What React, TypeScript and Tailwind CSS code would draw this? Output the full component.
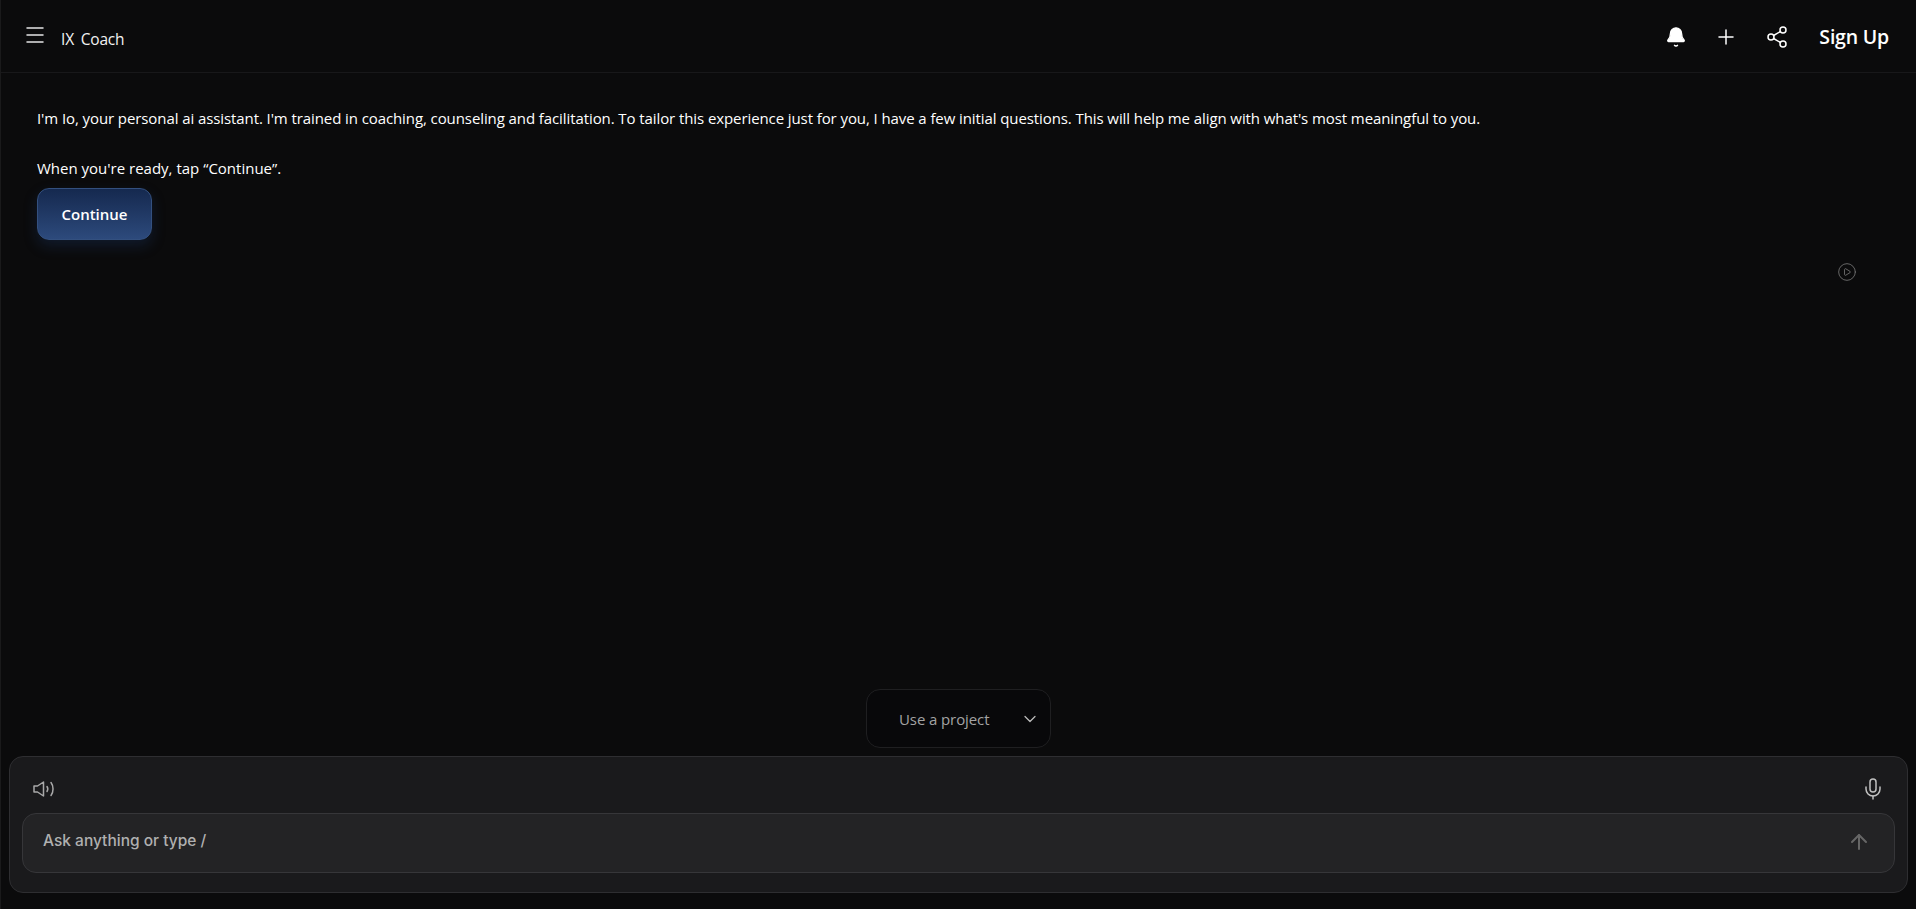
import { Menu, Bell, Plus, Share2, CirclePlay, ChevronDown, Mic, ArrowUp } from "lucide-react";

const body = { fontFamily: '"Open Sans", "Noto Sans", sans-serif' };

export default function App() {
  return (
    <div className="h-[909px] w-full flex flex-col bg-[#0b0b0c] text-white border-l border-[#1a1a1b] overflow-hidden" style={body}>
      <header className="h-[73px] shrink-0 flex items-center justify-between border-b border-[#18181a] pl-[22px] pr-[27px]">
        <div className="flex items-center gap-[14px]">
          <Menu size={24} strokeWidth={1.5} className="text-[#e5e5e5] -mt-[2px]" />
          <span className="text-[15.5px] text-[#f2f2f2] tracking-[-0.2px] [word-spacing:3px] mt-[7px]">IX Coach</span>
        </div>
        <div className="flex items-center">
          <Bell size={22} fill="white" strokeWidth={1.5} className="mr-[27px] mt-[1px]" />
          <Plus size={24} strokeWidth={1.5} className="mr-[27px] mt-[1px]" />
          <Share2 size={24} strokeWidth={1.5} className="mr-[30px] mt-[1px]" />
          <span className="text-[19.5px] font-semibold tracking-[-0.2px] mt-[1px]">Sign Up</span>
        </div>
      </header>
      <main className="flex-1 relative pl-[36px] pt-[33px]">
        <p className="text-[15px] leading-[25px] tracking-[-0.09px]">I'm Io, your personal ai assistant. I'm trained in coaching, counseling and facilitation. To tailor this experience just for you, I have a few initial questions. This will help me align with what's most meaningful to you.</p>
        <p className="text-[15px] leading-[25px] mt-[25px]">When you're ready, tap “Continue”.</p>
        <button className="mt-[7px] w-[115px] h-[52px] rounded-[12px] border border-[#33507f] bg-gradient-to-b from-[#15294f] to-[#2d4a7c] text-[15px] font-semibold shadow-[0_6px_14px_rgba(30,64,120,0.3)]">Continue</button>
        <div className="flex justify-end pr-[59px] mt-[22px]">
          <CirclePlay size={20} strokeWidth={1} className="text-[#777]" />
        </div>
      </main>
      <div className="flex justify-center mb-[8px]">
        <div className="w-[185px] h-[59px] rounded-[14px] border border-[#1f1f21] bg-[#08080a] flex items-center pl-[32px] pr-[10px] justify-between">
          <span className="text-[15px] text-[#a3a3a3] tracking-[-0.1px] mt-[2px]">Use a project</span>
          <ChevronDown size={20} strokeWidth={1.5} className="text-[#bbb]" />
        </div>
      </div>
      <div className="mx-[8px] mb-[16px] h-[137px] rounded-[14px] border border-[#2e2e31] bg-[#1a1a1c] px-[12px] flex flex-col" style={{ fontFamily: "Inter, sans-serif" }}>
        <div className="h-[56px] shrink-0 flex items-center justify-between pl-[11px] pr-[10px] pt-[8px]">
          <svg width="22" height="16" viewBox="0 0 22 16" fill="none" stroke="#a8a8a8" strokeWidth="1.5" strokeLinejoin="round" strokeLinecap="round">
            <path d="M1 5h3.5L10.5 1v14l-6-4H1z" />
            <path d="M14 5.5c1 1.5 1 3.500 0 5" />
            <path d="M18 1.500c2.700 3.500 2.700 9.500 0 13" />
          </svg>
          <Mic size={24} strokeWidth={1.5} className="text-[#c0c0c0]" />
        </div>
        <div className="h-[60px] rounded-[14px] border border-[#363639] bg-[#232325] flex items-center justify-between pl-[20px] pr-[23px]">
          <span className="text-[15.5px] font-medium text-[#b0b0b0] pb-[4px]">Ask anything or type /</span>
          <ArrowUp size={24} strokeWidth={2} className="text-[#666] -mt-[3px]" />
        </div>
      </div>
    </div>
  );
}
